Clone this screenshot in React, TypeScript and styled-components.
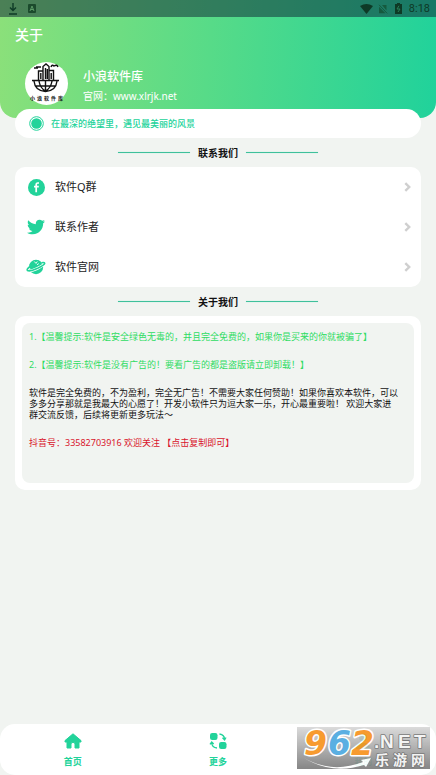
import React from "react";
import styled, { createGlobalStyle } from "styled-components";
import { FaTwitter } from "react-icons/fa";

const green = "#22d39a";

const GlobalStyle = createGlobalStyle`
  * { box-sizing: border-box; }
  body {
    margin: 0;
    background: #f1f4f1;
    font-family: "Noto Sans", "Noto Sans CJK SC", sans-serif;
    color: #222;
  }
  svg { display: block; flex: none; overflow: visible; }
  button { font: inherit; color: inherit; border: 0; background: none; padding: 0; cursor: pointer; }
`;

const Page = styled.div`
  display: flex;
  flex-direction: column;
  min-height: 100vh;
`;

const Header = styled.header`
  height: 118px;
  border-radius: 0 0 16px 16px;
  background: linear-gradient(94deg, #8be07a 0%, #57db88 48%, #20d29b 100%);
  color: #fff;
`;

const StatusBar = styled.div`
  display: flex;
  align-items: center;
  justify-content: space-between;
  height: 17px;
  padding: 0 6px 0 8px;
  background: rgba(12, 32, 50, 0.5);
  color: #0e3a26;
`;

const StatusGroup = styled.div<{ $gap: number }>`
  display: flex;
  align-items: center;
  gap: ${(p) => p.$gap}px;
`;

const Clock = styled.span`
  font-family: Roboto, sans-serif;
  font-size: 11px;
  line-height: 16px;
`;

const Title = styled.h1`
  margin: 7px 15px 0;
  font-family: "Noto Sans CJK SC", sans-serif;
  font-size: 14px;
  line-height: 20px;
  font-weight: 500;
`;

const Profile = styled.div`
  display: flex;
  align-items: center;
  gap: 15px;
  padding: 18px 25px 0;
`;

const Names = styled.div`
  display: flex;
  flex-direction: column;
  gap: 3px;
  padding-top: 5px;
`;

const Name = styled.strong`
  font-size: 12px;
  line-height: 16px;
  font-weight: 500;
`;

const Site = styled.span`
  font-size: 10px;
  line-height: 16px;
`;

const Main = styled.main`
  flex: 1;
  padding: 0 15px 24px;
`;

const Notice = styled.div`
  display: flex;
  align-items: center;
  gap: 7px;
  height: 29px;
  margin-top: -9px;
  padding: 0 14px;
  border-radius: 15px;
  background: #fff;
  color: ${green};
  font-size: 9px;
  font-weight: 500;
`;

const SectionTitle = styled.h2`
  display: flex;
  align-items: center;
  justify-content: center;
  gap: 8px;
  height: 29px;
  margin: 0;
  font-size: 10px;
  font-weight: 700;
  color: #111;
  &::before,
  &::after {
    content: "";
    width: 72px;
    height: 1px;
    background: #3fc09b;
    box-shadow: 0 0 1px #7fe6c8;
  }
`;

const Card = styled.section<{ $pad: number }>`
  padding: ${(p) => p.$pad}px;
  border-radius: 10px;
  background: #fff;
`;

const Row = styled.button`
  display: flex;
  align-items: center;
  width: 100%;
  height: 40px;
  padding: 0 10px 0 11px;
  gap: 9px;
  font-size: 11px;
  line-height: 16px;
  text-align: left;
`;

const RowIcon = styled.span`
  display: flex;
  justify-content: center;
  width: 20px;
  color: ${green};
`;

const RowLabel = styled.span`
  flex: 1;
`;

const Panel = styled.div`
  display: flex;
  flex-direction: column;
  align-items: flex-start;
  gap: 17px;
  min-height: 160px;
  padding: 8px 15px 8px 7px;
  border-radius: 8px;
  background: #f1f4f1;
  font-size: 9px;
  line-height: 11px;
`;

const Text = styled.p<{ $color: string }>`
  margin: 0;
  color: ${(p) => p.$color};
`;

const CopyButton = styled.button`
  color: #d9142c;
`;

const Nav = styled.nav`
  position: sticky;
  bottom: 0;
  display: flex;
  height: 51px;
  border-radius: 15px;
  background: #fff;
`;

const NavItem = styled.button`
  flex: 1;
  display: flex;
  flex-direction: column;
  align-items: center;
  gap: 5px;
  padding-top: 8px;
  color: ${green};
  font-size: 9px;
  line-height: 14px;
  font-weight: 700;
`;

const Watermark = styled.div`
  position: absolute;
  right: 6px;
  bottom: 6px;
  opacity: 0.92;
`;

const contacts = [
  { label: "软件Q群", icon: <FacebookIcon /> },
  { label: "联系作者", icon: <FaTwitter size={18} /> },
  { label: "软件官网", icon: <PlanetIcon /> },
];

function FacebookIcon() {
  return (
    <svg width="17" height="17" viewBox="0 0 17 17">
      <circle cx="8.5" cy="8.5" r="8.5" fill={green} />
      <path d="M11 4H9.8Q8.2 4 8.2 5.7V13.2M6 7.7H10.8" fill="none" stroke="#fff" strokeWidth="1.7" />
    </svg>
  );
}

function PlanetIcon() {
  return (
    <svg width="20" height="16" viewBox="0 0 20 16">
      <circle cx="10" cy="8" r="7.2" fill={green} />
      <path d="M4 7.5Q.2 10.5 1.4 11.5Q4 12.8 11 9.6Q18.8 5.8 18.7 4.2Q18.3 3 15.5 3.8" fill="none" stroke="#fff" strokeWidth="3" />
      <path d="M4 7.5Q.2 10.5 1.4 11.5Q4 12.8 11 9.6Q18.8 5.8 18.7 4.2Q18.3 3 15.5 3.8" fill="none" stroke={green} strokeWidth="1.6" />
      <path d="M3.2 7.4Q4 2 10 1.2Q14 1 16 4Q14 6.3 9 8.2Q6 9.3 3.5 9Z" fill={green} />
      <path d="M8.3 2.5L10 4.4L11.3 2.5M11 5.8L12.8 4.6" fill="none" stroke="#fff" strokeWidth="0.9" />
    </svg>
  );
}

function Chevron() {
  return (
    <svg width="7" height="10" viewBox="0 0 7 10">
      <path d="M1.3 1.2L5.2 5L1.3 8.8" fill="none" stroke="#cfcfcf" strokeWidth="2.4" />
    </svg>
  );
}

function Avatar() {
  return (
    <svg width="43" height="43" viewBox="0 0 43 43" role="img" aria-label="小浪软件库">
      <circle cx="21.5" cy="21.5" r="21.5" fill="#fff" />
      <g fill="none" stroke="#111" strokeWidth="1.4">
        <path d="M7 18.5H34M13.5 18V9H18V18M18 18V4.5L21 2L24 4.5V18M24 8.5H28.5V18M20.5 6V17M22.3 7V17M15.8 11V17M26.2 11V17" />
        <path d="M9 19Q10 29 20.5 29.5Q31 29 32 19M14 19Q15 26 20.5 29Q26 26 27 19M20.5 18V29M11 24H30" />
        <path d="M9 6H13M11 5H16M26 5Q27 2 29 4Q32 2 33 5" />
      </g>
      <text y="38" fontSize="5" fontWeight="700" fill="#111" fontFamily="Noto Sans CJK SC">
        <tspan x="5">小</tspan><tspan x="12">浪</tspan><tspan x="19">软</tspan><tspan x="26">件</tspan><tspan x="33">库</tspan>
      </text>
    </svg>
  );
}

function StatusIcons() {
  return (
    <StatusGroup $gap={5}>
      <svg width="13" height="10" viewBox="0 0 13 10"><path d="M0 2Q6.5-2 13 2L6.5 10Z" fill="#0e3a26" /></svg>
      <svg width="10" height="10" viewBox="0 0 10 10">
        <path d="M4 1H8.5V6.5ZM1 2.8V9.2H7.4Z" fill="#155a3e" />
        <path d="M1 0.8L9.2 9.4" stroke="#155a3e" />
      </svg>
      <svg width="11" height="11" viewBox="0 0 11 11">
        <path d="M4 0H7V1H9V11H2V1H4Z" fill="#0e3a26" />
        <path d="M6 2.8L4 6H7L5 9" fill="none" stroke="#28805a" />
      </svg>
      <Clock>8:18</Clock>
    </StatusGroup>
  );
}

function HomeIcon() {
  return (
    <svg width="18" height="18" viewBox="0 0 18 18">
      <path d="M9 1.8L17 8.6V10H15V16H11V11.5Q9 9 7 11.5V16H3V10H1V8.6Z" fill={green} stroke={green} strokeWidth="1" strokeLinejoin="round" />
    </svg>
  );
}

function MoreIcon() {
  return (
    <svg width="18" height="18" viewBox="0 0 18 18">
      <rect x="1" y="1" width="7.5" height="7" rx="2.2" fill={green} />
      <rect x="10" y="10" width="7.5" height="7" rx="2.2" fill={green} />
      <path d="M10.5 2Q15.5 3 15.5 7M13.5 5.8L15.6 8L17 5.5M8 16Q3 15.5 2.7 11M1 12.3L2.7 10L4.7 12" fill="none" stroke={green} strokeWidth="1.3" />
    </svg>
  );
}

function UserIcon() {
  return (
    <svg width="18" height="18" viewBox="0 0 18 18">
      <circle cx="9" cy="5.5" r="4" fill={green} />
      <path d="M2 17Q2 10.5 9 10.5Q16 10.5 16 17Z" fill={green} />
    </svg>
  );
}

function SiteLogo() {
  return (
    <svg width="133" height="42" viewBox="0 0 133 42" role="img" aria-label="962.NET 乐游网">
      <defs>
        <linearGradient id="plate" x1="0" y1="0" x2="0" y2="1">
          <stop offset="0" stopColor="#d8d8d8" />
          <stop offset="1" stopColor="#7c7c7c" />
        </linearGradient>
      </defs>
      <rect width="133" height="42" fill="url(#plate)" />
      <g fontFamily="DejaVu Sans" fontWeight="700" fontStyle="italic" fontSize="33" stroke="#fff" strokeWidth="3" strokeLinejoin="round" paintOrder="stroke">
        <text x="7" y="28" fill="#f7931e">9</text>
        <text x="31" y="28" fill="#4da9e0">6</text>
        <text x="54" y="28" fill="#f7931e">2</text>
      </g>
      <path d="M7 31Q35 47 66 35L64 33L74 31L69 40L67 38Q35 48 7 31Z" fill="#fff" />
      <g fill="#f4f4f4" stroke="#707070" strokeWidth="1.6" strokeLinejoin="round" paintOrder="stroke" fontWeight="700">
        <text y="21" fontFamily="Liberation Sans" fontSize="19">
          <tspan x="77">.</tspan><tspan x="83">N</tspan><tspan x="101">E</tspan><tspan x="117">T</tspan>
        </text>
        <text y="38" fontFamily="Noto Sans CJK SC" fontSize="14">
          <tspan x="78">乐</tspan><tspan x="96">游</tspan><tspan x="114">网</tspan>
        </text>
      </g>
    </svg>
  );
}

export default function App() {
  return (
    <Page lang="zh-CN">
      <GlobalStyle />
      <Header>
        <StatusBar>
          <StatusGroup $gap={10}>
            <svg width="10" height="12" viewBox="0 0 10 12">
              <path d="M5 0V7M2 4.5L5 7.5L8 4.5M1 11H9" fill="none" stroke="#0e3a26" strokeWidth="1.4" />
            </svg>
            <svg width="8" height="9" viewBox="0 0 8 9">
              <rect width="8" height="9" rx="1" fill="#1b4a2c" />
              <path d="M2 7L4 2L6 7M2.7 5.5H5.3" fill="none" stroke="#5b9a66" />
            </svg>
          </StatusGroup>
          <StatusIcons />
        </StatusBar>
        <Title>关于</Title>
        <Profile>
          <Avatar />
          <Names>
            <Name>小浪软件库</Name>
            <Site>官网：www.xlrjk.net</Site>
          </Names>
        </Profile>
      </Header>
      <Main>
        <Notice>
          <svg width="15" height="15" viewBox="0 0 15 15">
            <circle cx="7.5" cy="7.5" r="6.8" fill="none" stroke={green} strokeWidth="1" />
            <circle cx="7.5" cy="7.5" r="5.3" fill={green} />
          </svg>
          在最深的绝望里，遇见最美丽的风景
        </Notice>
        <SectionTitle>联系我们</SectionTitle>
        <Card $pad={0}>
          {contacts.map((c) => (
            <Row key={c.label} type="button">
              <RowIcon>{c.icon}</RowIcon>
              <RowLabel>{c.label}</RowLabel>
              <Chevron />
            </Row>
          ))}
        </Card>
        <SectionTitle>关于我们</SectionTitle>
        <Card $pad={7}>
          <Panel>
            <Text $color="#2fdc63">1.【温馨提示:软件是安全绿色无毒的，并且完全免费的，如果你是买来的你就被骗了】</Text>
            <Text $color="#2fdc63">2.【温馨提示:软件是没有广告的！要看广告的都是盗版请立即卸载！】</Text>
            <Text $color="#111">
              软件是完全免费的，不为盈利，完全无广告！不需要大家任何赞助！如果你喜欢本软件，可以多多分享那就是我最大的心愿了！开发小软件只为逗大家一乐，开心最重要啦！ 欢迎大家进群交流反馈，后续将更新更多玩法～
            </Text>
            <CopyButton type="button">抖音号：33582703916 欢迎关注 【点击复制即可】</CopyButton>
          </Panel>
        </Card>
      </Main>
      <Nav>
        <NavItem type="button"><HomeIcon />首页</NavItem>
        <NavItem type="button"><MoreIcon />更多</NavItem>
        <NavItem type="button"><UserIcon />我的</NavItem>
        <Watermark><SiteLogo /></Watermark>
      </Nav>
    </Page>
  );
}
